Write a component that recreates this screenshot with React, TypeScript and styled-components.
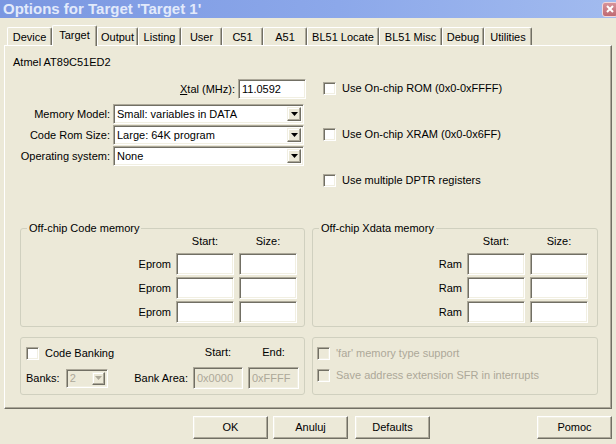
import React from "react";
import styled, { createGlobalStyle, css } from "styled-components";

const GlobalStyle = createGlobalStyle`
  html, body {
    margin: 0;
    padding: 0;
    background: #ece9d8;
  }
  body {
    font-family: "Liberation Sans", Arial, sans-serif;
    font-size: 11px;
    color: #000;
  }
`;

const sunken = css`
  box-sizing: border-box;
  border: 1px solid;
  border-color: #aca899 #ffffff #ffffff #aca899;
  box-shadow: inset 1px 1px 0 #716f64, inset -1px -1px 0 #f1efe2;
`;

const raised = css`
  box-sizing: border-box;
  border: 1px solid;
  border-color: #f1efe2 #716f64 #716f64 #f1efe2;
  box-shadow: inset -1px -1px 0 #aca899, inset 1px 1px 0 #ffffff;
`;

const Window = styled.div`
  width: 616px;
  height: 444px;
  overflow: hidden;
  background: #ece9d8;
  display: flex;
  flex-direction: column;
`;

const TitleBar = styled.div`
  height: 18px;
  flex: none;
  display: flex;
  align-items: center;
  padding-left: 3px;
  background: linear-gradient(to right, #7a97e1 0%, #8ca8ea 55%, #a2bbef 100%);
`;

const Title = styled.span`
  font-weight: bold;
  font-size: 15px;
  line-height: 18px;
  color: #e2eafb;
`;

const CloseButton = styled.div`
  width: 16px;
  height: 15px;
  margin-left: auto;
  margin-right: -2px;
  box-sizing: border-box;
  border: 1px solid #f2d7da;
  border-radius: 3px;
  background: linear-gradient(#d69299, #c06a73);
  display: flex;
  align-items: center;
  justify-content: center;
`;

const Body = styled.div`
  flex: 1;
  display: flex;
  flex-direction: column;
  padding: 7px 4px 0 4px;
`;

const TabStrip = styled.div`
  height: 20px;
  display: flex;
  align-items: flex-end;
  padding-left: 3px;
`;

const Tab = styled.div<{ $w: number; $active?: boolean }>`
  box-sizing: border-box;
  width: ${(p) => p.$w}px;
  height: ${(p) => (p.$active ? 21 : 18)}px;
  margin-bottom: ${(p) => (p.$active ? -1 : 0)}px;
  position: relative;
  z-index: ${(p) => (p.$active ? 2 : 1)};
  padding-top: 3px;
  text-align: center;
  line-height: 13px;
  white-space: nowrap;
  background: #ece9d8;
  border-top: 1px solid #fff;
  border-left: 1px solid #fff;
  border-right: 1px solid #716f64;
  border-radius: 2px 2px 0 0;
  box-shadow: inset -1px 0 0 #aca899;
`;

const Panel = styled.div`
  box-sizing: border-box;
  width: 608px;
  height: 364px;
  border: 1px solid;
  border-color: #fff #716f64 #716f64 #fff;
  box-shadow: inset -1px -1px 0 #aca899;
  padding: 10px 0 0 8px;
`;

const TopSection = styled.div`
  display: flex;
  gap: 17px;
`;

const LeftCol = styled.div`
  width: 293px;
  display: flex;
  flex-direction: column;
`;

const DeviceName = styled.div`
  line-height: 13px;
  height: 13px;
`;

const XtalRow = styled.div`
  margin-top: 10px;
  height: 20px;
  display: flex;
  justify-content: flex-end;
  align-items: center;
  gap: 3px;
`;

const SelectList = styled.div`
  margin-top: 5px;
  display: flex;
  flex-direction: column;
  gap: 1px;
`;

const SelectRow = styled.div`
  display: grid;
  grid-template-columns: 97px 191px;
  column-gap: 3px;
  align-items: center;
  height: 20px;
`;

const RightLabel = styled.span<{ $disabled?: boolean }>`
  text-align: right;
  white-space: nowrap;
  line-height: 13px;
  color: ${(p) => (p.$disabled ? "#aca899" : "#000")};
`;

const Field = styled.div<{ $h: number; $disabled?: boolean }>`
  ${sunken};
  width: 100%;
  height: ${(p) => p.$h}px;
  background: ${(p) => (p.$disabled ? "#ece9d8" : "#fff")};
  color: ${(p) => (p.$disabled ? "#aca899" : "#000")};
  padding: 0 3px;
  display: flex;
  align-items: center;
  line-height: 13px;
  white-space: nowrap;
  overflow: hidden;
`;

const XtalField = styled(Field)`
  width: 68px;
`;

const Combo = styled.div<{ $h: number; $disabled?: boolean }>`
  ${sunken};
  height: ${(p) => p.$h}px;
  background: ${(p) => (p.$disabled ? "#ece9d8" : "#fff")};
  color: ${(p) => (p.$disabled ? "#aca899" : "#000")};
  display: flex;
  align-items: center;
  padding: 2px 2px 2px 3px;
  line-height: 13px;
  white-space: nowrap;
`;

const ComboValue = styled.span`
  flex: 1;
  overflow: hidden;
`;

const ArrowButton = styled.div`
  ${raised};
  height: 100%;
  aspect-ratio: 1;
  background: #ece9d8;
  display: flex;
  align-items: center;
  justify-content: center;
`;

const BanksCombo = styled.div`
  width: 42px;
`;

const RightCol = styled.div`
  padding-top: 26px;
  display: flex;
  flex-direction: column;
  gap: 33px;
`;

const CheckRow = styled.label<{ $disabled?: boolean }>`
  height: 13px;
  display: flex;
  align-items: center;
  gap: 6px;
  line-height: 13px;
  white-space: nowrap;
  color: ${(p) => (p.$disabled ? "#aca899" : "#000")};
`;

const CheckBox = styled.span<{ $disabled?: boolean }>`
  ${sunken};
  width: 13px;
  height: 13px;
  flex: none;
  background: ${(p) => (p.$disabled ? "#ece9d8" : "#fff")};
`;

const GroupGrid = styled.div<{ $top: number }>`
  display: grid;
  grid-template-columns: 285px 286px;
  column-gap: 7px;
  margin-left: 7px;
  margin-top: ${(p) => p.$top}px;
`;

const Group = styled.fieldset<{ $h: number }>`
  box-sizing: border-box;
  margin: 0;
  min-width: 0;
  height: ${(p) => p.$h}px;
  border: 1px solid #d0d0bf;
  border-radius: 3px;
  padding: 0;
`;

const Legend = styled.legend`
  margin-left: 6px;
  padding: 0 2px;
  line-height: 13px;
`;

const MemoryTable = styled.div<{ $right: number }>`
  display: grid;
  grid-template-columns: 1fr 58px 58px;
  grid-template-rows: 16px 22px 22px 22px;
  column-gap: 5px;
  row-gap: 2px;
  padding-right: ${(p) => p.$right}px;
  align-items: center;
`;

const ColHead = styled.span`
  text-align: center;
  line-height: 13px;
  align-self: start;
`;

const BankTable = styled.div`
  display: grid;
  grid-template-columns: 1fr auto 50px 51px;
  grid-template-rows: 15px 22px;
  column-gap: 5px;
  row-gap: 6px;
  align-items: center;
  padding: 8px 5px 0 5px;
`;

const BanksCell = styled.div`
  display: flex;
  align-items: center;
  gap: 6px;
`;

const OptionList = styled.div`
  display: flex;
  flex-direction: column;
  gap: 9px;
  padding: 9px 0 0 4px;
`;

const ButtonBar = styled.div`
  display: flex;
  margin-top: 7px;
  padding-left: 189px;
`;

const Button = styled.div<{ $gap?: number }>`
  box-sizing: border-box;
  width: 75px;
  height: 23px;
  margin-left: ${(p) => p.$gap ?? 0}px;
  border: 1px solid;
  border-color: #fff #716f64 #716f64 #fff;
  box-shadow: inset -1px -1px 0 #aca899, inset 1px 1px 0 #f1efe2;
  background: #ece9d8;
  display: flex;
  align-items: center;
  justify-content: center;
  line-height: 13px;
`;

const HelpButton = styled(Button)`
  margin-left: auto;
`;

const Arrow = ({ disabled }: { disabled?: boolean }) => (
  <svg width="7" height="4" viewBox="0 0 7 4">
    <polygon points="0,0 7,0 3.5,4" fill={disabled ? "#aca899" : "#000"} />
  </svg>
);

const Select = ({
  value,
  h = 20,
  disabled,
}: {
  value: string;
  h?: number;
  disabled?: boolean;
}) => (
  <Combo $h={h} $disabled={disabled}>
    <ComboValue>{value}</ComboValue>
    <ArrowButton>
      <Arrow disabled={disabled} />
    </ArrowButton>
  </Combo>
);

const Check = ({ label, disabled }: { label: string; disabled?: boolean }) => (
  <CheckRow $disabled={disabled}>
    <CheckBox $disabled={disabled} />
    {label}
  </CheckRow>
);

const tabs = [
  { label: "Device", w: 45 },
  { label: "Target", w: 45, active: true },
  { label: "Output", w: 41 },
  { label: "Listing", w: 43 },
  { label: "User", w: 41 },
  { label: "C51", w: 41 },
  { label: "A51", w: 44 },
  { label: "BL51 Locate", w: 72 },
  { label: "BL51 Misc", w: 63 },
  { label: "Debug", w: 42 },
  { label: "Utilities", w: 48 },
];

const selects = [
  { label: "Memory Model:", value: "Small: variables in DATA" },
  { label: "Code Rom Size:", value: "Large: 64K program" },
  { label: "Operating system:", value: "None" },
];

const MemoryGroup = ({
  title,
  rowLabel,
  right,
}: {
  title: string;
  rowLabel: string;
  right: number;
}) => (
  <Group $h={105}>
    <Legend>{title}</Legend>
    <MemoryTable $right={right}>
      <span />
      <ColHead>Start:</ColHead>
      <ColHead>Size:</ColHead>
      {[0, 1, 2].map((i) => (
        <React.Fragment key={i}>
          <RightLabel>{rowLabel}</RightLabel>
          <Field $h={22} />
          <Field $h={22} />
        </React.Fragment>
      ))}
    </MemoryTable>
  </Group>
);

export default function App() {
  return (
    <Window>
      <GlobalStyle />
      <TitleBar>
        <Title>Options for Target 'Target 1'</Title>
        <CloseButton>
          <svg width="8" height="8" viewBox="0 0 8 8">
            <path d="M1 1 L7 7 M7 1 L1 7" stroke="#fff" strokeWidth="2" />
          </svg>
        </CloseButton>
      </TitleBar>
      <Body>
        <TabStrip>
          {tabs.map((t) => (
            <Tab key={t.label} $w={t.w} $active={t.active}>
              {t.label}
            </Tab>
          ))}
        </TabStrip>
        <Panel>
          <TopSection>
            <LeftCol>
              <DeviceName>Atmel AT89C51ED2</DeviceName>
              <XtalRow>
                <RightLabel>
                  <u>X</u>tal (MHz):
                </RightLabel>
                <XtalField $h={20}>11.0592</XtalField>
              </XtalRow>
              <SelectList>
                {selects.map((s) => (
                  <SelectRow key={s.label}>
                    <RightLabel>{s.label}</RightLabel>
                    <Select value={s.value} />
                  </SelectRow>
                ))}
              </SelectList>
            </LeftCol>
            <RightCol>
              <Check label="Use On-chip ROM (0x0-0xFFFF)" />
              <Check label="Use On-chip XRAM (0x0-0x6FF)" />
              <Check label="Use multiple DPTR registers" />
            </RightCol>
          </TopSection>

          <GroupGrid $top={35}>
            <MemoryGroup title="Off-chip Code memory" rowLabel="Eprom" right={7} />
            <MemoryGroup title="Off-chip Xdata memory" rowLabel="Ram" right={9} />
          </GroupGrid>

          <GroupGrid $top={10}>
            <Group $h={58}>
              <BankTable>
                <Check label="Code Banking" />
                <span />
                <ColHead>Start:</ColHead>
                <ColHead>End:</ColHead>
                <BanksCell>
                  <span>Banks:</span>
                  <BanksCombo>
                    <Select value="2" h={19} disabled />
                  </BanksCombo>
                </BanksCell>
                <RightLabel>Bank Area:</RightLabel>
                <Field $h={22} $disabled>
                  0x0000
                </Field>
                <Field $h={22} $disabled>
                  0xFFFF
                </Field>
              </BankTable>
            </Group>
            <Group $h={58}>
              <OptionList>
                <Check label="'far' memory type support" disabled />
                <Check label="Save address extension SFR in interrupts" disabled />
              </OptionList>
            </Group>
          </GroupGrid>
        </Panel>
        <ButtonBar>
          <Button>OK</Button>
          <Button $gap={5}>Anuluj</Button>
          <Button $gap={7}>Defaults</Button>
          <HelpButton>Pomoc</HelpButton>
        </ButtonBar>
      </Body>
    </Window>
  );
}
